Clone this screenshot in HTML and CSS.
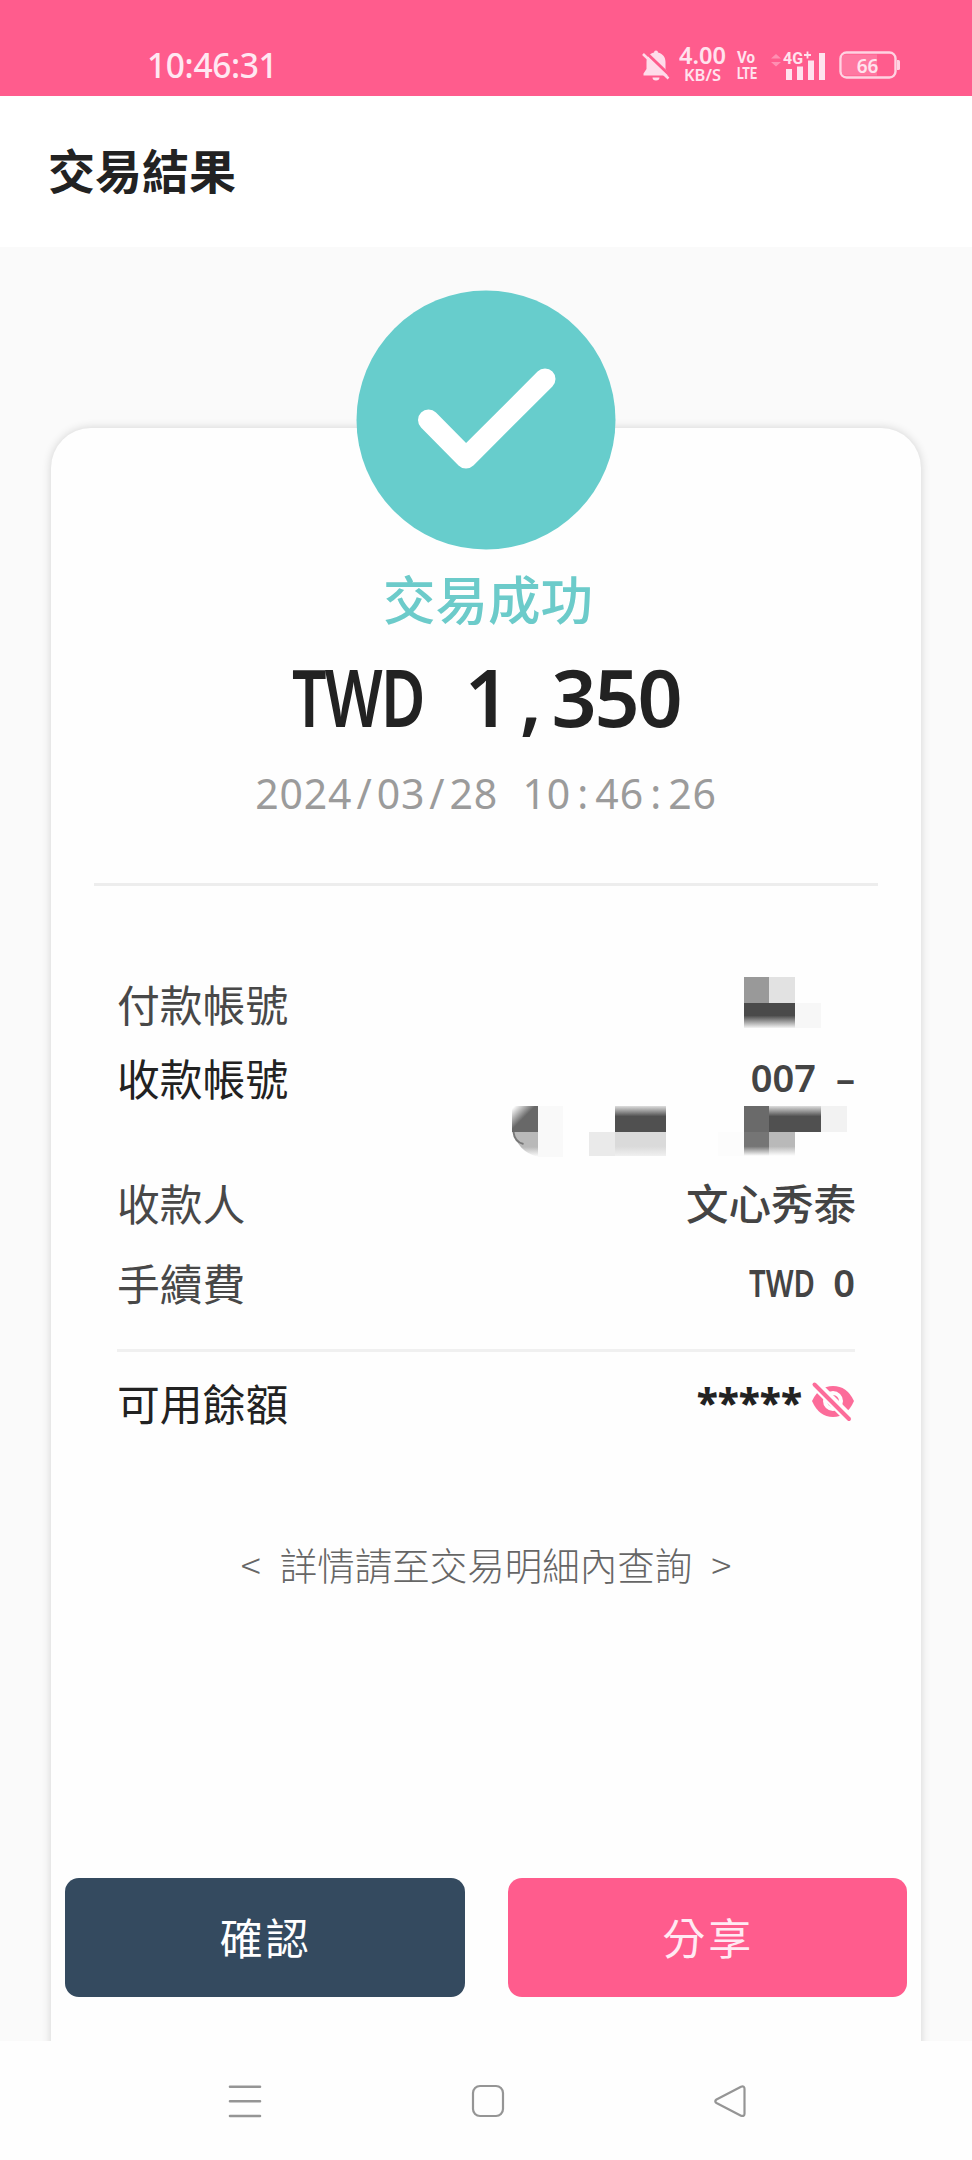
FILE: index.html
```html
<!DOCTYPE html>
<html lang="zh-Hant">
<head>
<meta charset="utf-8">
<title>交易結果</title>
<link rel="stylesheet" href="styles.css">
</head>
<body>
<div class="screen">
  <div class="statusbar">
    <span class="clock">10:46:31</span>
    <div class="indicators">
      <svg class="bell" width="28" height="32" viewBox="0 0 28 32">
        <path fill="#ffdcea" d="M14 1.500a2 2 0 0 1 2 2c4.500 1 7.500 4.500 7.500 9.500v7l3 4.500v2h-25v-2l3-4.500v-7c0-5 3-8.500 7.500-9.500a2 2 0 0 1 2-2zM10.500 28.500h7a3.500 3 0 0 1-7 0z"/>
        <path stroke="#ff5c8d" stroke-width="3" d="M4 3.500 29 27.500"/>
        <path stroke="#ffdcea" stroke-width="2.600" d="M1 5 26.500 29.500"/>
      </svg>
      <svg class="speed" width="48" height="54" viewBox="0 -8 48 54">
        <text class="speed-num" x="0" y="18" textLength="47" lengthAdjust="spacingAndGlyphs">4.00</text>
        <text class="speed-unit" x="5" y="34.500" textLength="37" lengthAdjust="spacingAndGlyphs">KB/S</text>
      </svg>
      <svg class="volte" width="22" height="44" viewBox="0 -5 22 44">
        <text x="1" y="15" textLength="18" lengthAdjust="spacingAndGlyphs">Vo</text>
        <text x="1" y="30.500" textLength="20" lengthAdjust="spacingAndGlyphs">LTE</text>
      </svg>
      <svg class="signal" width="56" height="34" viewBox="0 0 56 34">
        <path fill="#ff8fb2" d="M1 10.500 6 6l5 4.500zM1 14h10l-5 4.500z"/>
        <text class="net" x="13" y="16" textLength="20" lengthAdjust="spacingAndGlyphs">4G</text>
        <path stroke="#ffe3ee" stroke-width="1.800" d="M34 7h7M37.500 3.500v7"/>
        <path fill="#ffe3ee" d="M16 21h6v11h-6zM27 18.500h6V32h-6zM38 12.500h6V32h-6zM49 5h6v27h-6z"/>
      </svg>
      <svg class="battery" width="62" height="30" viewBox="0 0 62 30">
        <rect x="1.500" y="2.500" width="55" height="25" rx="6" fill="none" stroke="#ffd3e2" stroke-width="2.400"/>
        <path fill="#ff78a1" d="M6 4.500h32v21H6a3 3 0 0 1-3-3v-15a3 3 0 0 1 3-3z"/>
        <path fill="#ffd3e2" d="M58 10h1.500a1.500 1.500 0 0 1 1.500 1.500v7a1.500 1.500 0 0 1-1.500 1.500H58z"/>
        <text class="percent" x="28.500" y="22.500" text-anchor="middle">66</text>
      </svg>
    </div>
  </div>

  <header class="header"><h1 class="title">交易結果</h1></header>

  <main class="page">
    <section class="card">
      <svg class="check" width="260" height="260" viewBox="0 0 260 260">
        <circle cx="130" cy="130" r="129.500" fill="#67cdcc"/>
        <path fill="none" stroke="#fff" stroke-width="21" stroke-linecap="round" stroke-linejoin="round" d="M72.500 130 110 168 189 89"/>
      </svg>
      <div class="result">交易成功</div>
      <div class="amount"><span class="currency">TWD</span>1<b>,</b>350</div>
      <div class="datetime">2024<b>/</b>03<b>/</b>28<i></i>10<b>:</b>46<b>:</b>26</div>
      <hr class="rule">

      <div class="details">
        <div class="row row-from">
          <span class="label">付款帳號</span>
          <svg class="mask-from" width="112" height="52" viewBox="0 0 112 52">
            <defs>
              <linearGradient id="fadeDown" x1="0" y1="0" x2="0" y2="1"><stop offset=".5" stop-color="#4a4a4a"/><stop offset="1" stop-color="#f4f4f4"/></linearGradient>
            </defs>
            <path fill="#999" d="M1 0h25v26H1z"/><path fill="#e2e2e2" d="M26 0h26v26H26z"/>
            <path fill="url(#fadeDown)" d="M1 26h51v25H1z"/><path fill="#f7f7f7" d="M52 26h26v25H52z"/>
          </svg>
        </div>
        <div class="row row-to">
          <span class="label strong">收款帳號</span>
          <span class="value mono">007<i></i><em class="dash">–</em></span>
        </div>
        <div class="mask-line">
          <svg width="344" height="58" viewBox="0 0 344 58">
            <defs>
              <linearGradient id="fadeUp" x1="0" y1="0" x2="0" y2="1"><stop offset="0" stop-color="#ddd"/><stop offset=".4" stop-color="#505050"/></linearGradient>
              <linearGradient id="fadeTail" x1="0" y1="0" x2="0" y2="1"><stop offset=".6" stop-color="#757575"/><stop offset="1" stop-color="#fff"/></linearGradient>
              <linearGradient id="fadeLight" x1="0" y1="0" x2="0" y2="1"><stop offset=".6" stop-color="#b9b9b9"/><stop offset="1" stop-color="#fff"/></linearGradient>
              <linearGradient id="fadePale" x1="0" y1="0" x2="0" y2="1"><stop offset=".6" stop-color="#dadada"/><stop offset="1" stop-color="#f0f0f0"/></linearGradient>
              <linearGradient id="fadeSide" x1="0" y1="0" x2="1" y2="1"><stop offset=".05" stop-color="#fff"/><stop offset=".45" stop-color="#686868"/></linearGradient>
            </defs>
            <path fill="url(#fadeSide)" d="M0 5h26v26H0z"/><path fill="url(#fadeLight)" d="M2 31h24v25Q5 50 2 31z"/>
            <path fill="none" stroke="#777" stroke-width="2" d="M1.500 31q1 10 10 12"/>
            <path fill="#f9f9f9" d="M26 5h25v51H26z"/>
            <path fill="#eaeaea" d="M77 31h26v24H77z"/><path fill="url(#fadePale)" d="M103 31h51v24h-51z"/>
            <path fill="url(#fadeUp)" d="M103 5h51v26h-51z"/>
            <path fill="#fcfcfc" d="M206 31h26v24h-26z"/>
            <path fill="#6a6a6a" d="M232 5h25v26h-25z"/><path fill="url(#fadeUp)" d="M257 5h52v26h-52z"/>
            <path fill="#f2f2f2" d="M309 5h26v26h-26z"/>
            <path fill="url(#fadeTail)" d="M232 31h25v24h-25z"/><path fill="url(#fadeLight)" d="M257 31h26v24h-26z"/>
          </svg>
        </div>
        <div class="row row-name">
          <span class="label">收款人</span>
          <span class="value name">文心秀泰</span>
        </div>
        <div class="row row-fee">
          <span class="label">手續費</span>
          <span class="value mono"><span class="currency-small">TWD</span>0</span>
        </div>
        <hr class="rule-inner">
        <div class="row row-balance">
          <span class="label strong">可用餘額</span>
          <span class="balance">
            <span class="stars">*****</span>
            <svg width="44" height="42" viewBox="0 0 44 42">
              <path fill="#fc6c9a" d="M1 20Q8 5 22 5t21 15q-7 16-21 16T1 20z"/>
              <circle cx="22" cy="20" r="8" fill="none" stroke="#fefefe" stroke-width="4"/>
              <path stroke="#fefefe" stroke-width="10" d="M4 3 40 39"/>
              <path stroke="#fc6c9a" stroke-width="4" stroke-linecap="round" d="M3.500 3.500 38 38"/>
            </svg>
          </span>
        </div>
      </div>

      <p class="note"><span>&lt;</span><span class="note-text">詳情請至交易明細內查詢</span><span>&gt;</span></p>

      <div class="actions">
        <button class="btn confirm">確認</button>
        <button class="btn share">分享</button>
      </div>
    </section>
  </main>

  <nav class="navbar">
    <svg width="34" height="34" viewBox="0 0 34 34"><path fill="none" stroke="#959595" stroke-width="2.600" stroke-linecap="round" d="M2 2.800h30M2 17.300h30M2 32h30"/></svg>
    <svg width="34" height="34" viewBox="0 0 34 34"><rect x="2" y="2" width="30" height="30" rx="7" fill="none" stroke="#959595" stroke-width="2.200"/></svg>
    <svg width="34" height="34" viewBox="0 0 34 34"><path fill="none" stroke="#959595" stroke-width="2.200" stroke-linejoin="round" d="M3.500 15.500 28 2.700q3.500-1 3.500 2v25q0 3-3.500 2L3.500 19q-2.500-1.700 0-3.500z"/></svg>
  </nav>
</div>
</body>
</html>
```
FILE: styles.css
```css
* { box-sizing: border-box; }

body {
  margin: 0;
  font-family: "Noto Sans CJK TC", sans-serif;
  color: #222;
}

.screen {
  width: 972px;
  height: 2160px;
  display: flex;
  flex-direction: column;
  background: #fefefe;
  overflow: hidden;
}

svg { display: block; flex: none; }

/* status bar */
.statusbar {
  flex: none;
  height: 96px;
  padding: 34px 71px 0 147px;
  display: flex;
  justify-content: space-between;
  align-items: flex-start;
  background: #ff5c8d;
  color: #ffe8f2;
}

.clock {
  font: 500 33.500px/62px "Noto Sans", sans-serif;
  height: 62px;
  letter-spacing: -0.350px;
}

.indicators { display: flex; align-items: center; height: 61px; }
.bell { margin-right: 9px; }
.speed { font-family: "Noto Sans", sans-serif; font-weight: 600; fill: #ffe3ee; }
.speed-num { font-size: 23.500px; }
.speed-unit { font-size: 16.500px; }
.volte { margin-left: 9px; font: 700 16.500px "Roboto", sans-serif; fill: #ffe3ee; }
.signal { margin-left: 12px; }
.net { font: 700 17px "Roboto", sans-serif; fill: #ffe3ee; }
.battery { margin-left: 13px; }
.percent { font: 600 19px "Noto Sans", sans-serif; fill: #ffe3ee; }

/* header */
.header {
  flex: none;
  height: 151px;
  padding: 0 0 5px 48px;
  display: flex;
  align-items: center;
  background: #fff;
}
.title { margin: 0; font-size: 47px; font-weight: 700; line-height: 60px; }

/* card */
.page {
  flex: none;
  height: 1794px;
  padding: 181px 51px 0;
  background: #fafafa;
  overflow: hidden;
}

.card {
  height: 1660px;
  display: flex;
  flex-direction: column;
  align-items: center;
  background: #fefefe;
  border-radius: 40px;
  box-shadow: 0 0 10px rgba(0, 0, 0, 0.16);
}

.check { margin-top: -138px; }
.result {
  height: 80px;
  margin-top: 7px;
  padding-left: 4px;
  font-size: 52.500px;
  font-weight: 500;
  line-height: 80px;
  color: #6ccbca;
}

.amount, .datetime, .mono { display: flex; font-family: "Noto Sans", sans-serif; }
.amount b, .datetime b { font-weight: inherit; text-align: center; }

.amount {
  height: 100px;
  margin-top: 10px;
  font-size: 79px;
  font-weight: 600;
  line-height: 100px;
  letter-spacing: -2.300px;
}
.currency { width: 173px; transform: scaleX(0.77); transform-origin: left; }
.amount b { width: 44px; }

.datetime {
  height: 60px;
  margin-top: 16px;
  font-size: 41px;
  line-height: 60px;
  letter-spacing: 0.850px;
  color: #9b9b9b;
}
.datetime i, .datetime b { width: 24.300px; }

.rule { width: 784px; height: 3px; margin: 60px 0 0; border: 0; background: #ededed; flex: none; }

/* details */
.details { width: 738px; padding-top: 79px; }
.row { display: flex; justify-content: space-between; align-items: center; }
.label { font-size: 42.800px; line-height: 60px; color: #484848; font-weight: 400; }
.label.strong { color: #222; }
.value { font-size: 42.500px; line-height: 60px; font-weight: 500; color: #444; }
.name { margin-right: -1px; }
.mono { font-size: 38px; font-weight: 600; }
.mono i { width: 20px; }
.dash { font-style: normal; }
.currency-small { width: 84px; transform: scaleX(0.77); transform-origin: left; }

.row-from { height: 76px; }
.row-to { height: 72px; }
.mask-line { height: 58px; margin-top: -12px; padding-left: 395px; }
.row-name { height: 80px; margin-top: 3px; }
.row-fee { height: 80px; }
.rule-inner { height: 3px; margin: 27px 0 0; border: 0; background: #f0f0f0; }
.row-balance { height: 99px; }
.balance { display: flex; align-items: center; gap: 9px; }
.stars { font: 800 39px/42px "Noto Sans", sans-serif; height: 42px; }

.note {
  height: 60px;
  margin: 83px 0 0;
  display: flex;
  gap: 19px;
  font-size: 37.500px;
  line-height: 60px;
  font-weight: 300;
  color: #666;
}

/* buttons */
.actions { display: flex; gap: 43px; margin-top: 284px; }
.btn {
  width: 399.500px;
  height: 119px;
  padding: 0 0 4px 2px;
  border: 0;
  border-radius: 14px;
  font: 400 43px/60px "Noto Sans CJK TC", sans-serif;
  letter-spacing: 3px;
  color: #fff;
}
.confirm { background: #344a5f; }
.share { background: #ff5c8d; color: #ffeaf3; }

/* system navigation */
.navbar {
  flex: 1;
  padding: 43px 225px 0 228px;
  display: flex;
  justify-content: space-between;
  align-items: flex-start;
  background: #fefefe;
}
```
